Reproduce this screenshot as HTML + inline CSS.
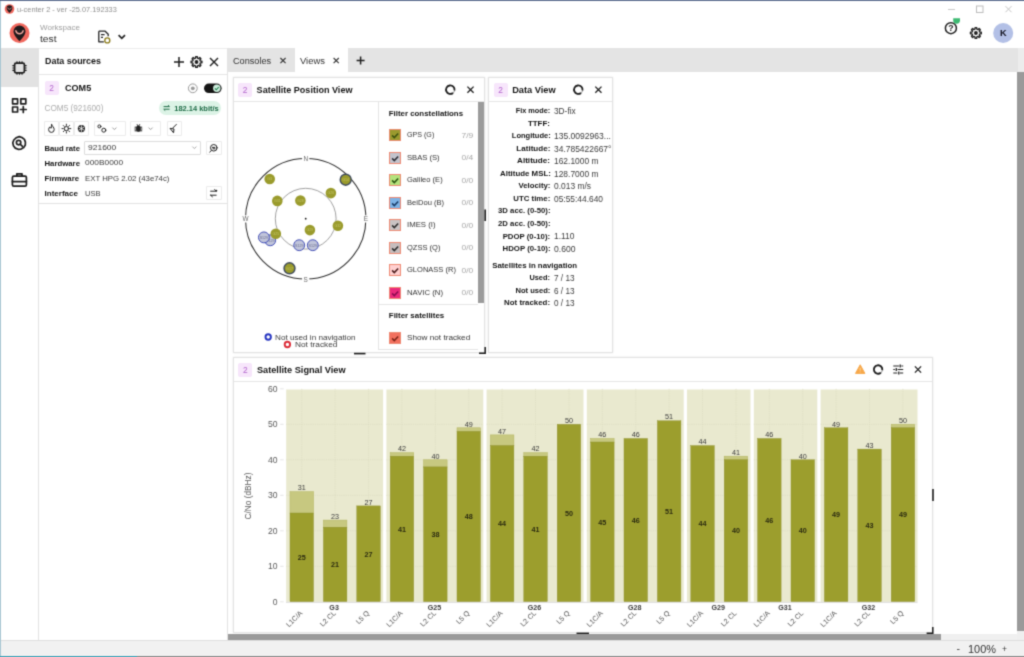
<!DOCTYPE html><html><head><meta charset="utf-8"><title>u-center 2</title><style>
*{box-sizing:border-box;margin:0;padding:0}
html,body{width:1024px;height:657px;overflow:hidden;background:#fff;font-family:"Liberation Sans",sans-serif;color:#222}
.a{position:absolute}
.t{position:absolute;white-space:nowrap;line-height:1;transform-origin:0 50%}
.b{font-weight:bold}
svg{position:absolute;overflow:visible}
#root{position:absolute;left:0;top:0;width:1024px;height:657px;overflow:hidden;background:#fff;will-change:transform;filter:url(#bl)}
.badge{position:absolute;width:14px;height:14px;background:#f7e6fb;border-radius:2px;color:#b264cc;font-size:8.4px;font-weight:normal;text-align:center;line-height:14px}
.panel{position:absolute;background:#fff;border:1px solid #e3e3e3;box-shadow:0 0 2px rgba(0,0,0,.10)}
.ph{position:absolute;left:0;right:0;top:0;height:24px;border-bottom:1px solid #e6e6e6}
.btn{position:absolute;border:1px solid #ebebeb;background:#fff;border-radius:1px}
</style></head><body><svg width="0" height="0" style="position:absolute"><filter id="bl" x="0" y="0" width="100%" height="100%" color-interpolation-filters="sRGB"><feConvolveMatrix order="3" kernelMatrix="0.0277 0.1110 0.0277 0.1110 0.4452 0.1110 0.0277 0.1110 0.0277" edgeMode="duplicate" preserveAlpha="true"/></filter></svg><div id="root">
<div class="a" style="left:0px;top:0px;width:1024px;height:1px;background:#5d6e90;"></div>
<div class="a" style="left:0px;top:1px;width:1px;height:656px;background:#a9c7d3;"></div>
<svg style="left:0px;top:0px" width="20" height="20" viewBox="0 0 20 20"><circle cx="9.5" cy="9" r="4.8" fill="#f0685e"/><path transform="translate(9.5,9) scale(0.48)" d="M0,8.2 C-2.2,5.6 -6,1.8 -6,-1.6 A6,6 0 1 1 6,-1.6 C6,1.8 2.2,5.6 0,8.2Z" fill="#1f1a1c"/><path transform="translate(9.5,9) scale(0.48)" d="M-3.6,-2.2 A3.7,3.7 0 0 0 3.6,-2.2" fill="none" stroke="#f6a79f" stroke-width="1.5" stroke-linecap="round"/></svg>
<div class="t" style="font-size:7.40px;color:#8e8e8e;top:5.97px;left:17.00px;transform-origin:0 50%;">u-center 2 - ver -25.07.192333</div>
<svg style="left:940px;top:0px" width="84" height="18" viewBox="0 0 84 18"><path d="M8,9.5h7" stroke="#c9c9c9" stroke-width="1" fill="none"/><rect x="36.5" y="6" width="6.5" height="6.5" fill="none" stroke="#bdbdbd" stroke-width="1"/><path d="M65.5,6.2l6,6m0,-6l-6,6" stroke="#c4c4c4" stroke-width="1" fill="none"/></svg>
<svg style="left:0px;top:18px" width="40" height="30" viewBox="0 0 40 30"><circle cx="19.5" cy="15" r="10" fill="#f0685e"/><path transform="translate(19.5,15) scale(1.0)" d="M0,8.2 C-2.2,5.6 -6,1.8 -6,-1.6 A6,6 0 1 1 6,-1.6 C6,1.8 2.2,5.6 0,8.2Z" fill="#1f1a1c"/><path transform="translate(19.5,15) scale(1.0)" d="M-3.6,-2.2 A3.7,3.7 0 0 0 3.6,-2.2" fill="none" stroke="#f6a79f" stroke-width="1.5" stroke-linecap="round"/></svg>
<div class="t" style="font-size:8.03px;color:#9e9e9e;top:23.67px;left:40.00px;transform-origin:0 50%;">Workspace</div>
<div class="t" style="font-size:9.20px;color:#2a2a2a;top:34.99px;left:40.00px;transform-origin:0 50%;transform:scaleX(1.113);">test</div>
<svg style="left:96px;top:29px" width="34" height="16" viewBox="0 0 34 16"><path d="M2.8,2.2h6.4l3,3v2" fill="none" stroke="#222" stroke-width="1.3" stroke-linejoin="round"/><path d="M2.8,2.2v10.6h5" fill="none" stroke="#222" stroke-width="1.3" stroke-linejoin="round"/><path d="M5,5.6h3.6M5,8.4h2" stroke="#222" stroke-width="1.2"/><circle cx="11.3" cy="11.4" r="2.5" fill="none" stroke="#8a7a18" stroke-width="1.3"/><path d="M22.6,6.2l3.2,3.2l3.2,-3.2" fill="none" stroke="#222" stroke-width="1.7"/></svg>
<svg style="left:940px;top:18px" width="84" height="30" viewBox="0 0 84 30"><circle cx="10.9" cy="10.2" r="5.5" fill="#fff" stroke="#222" stroke-width="1.5"/><text x="10.9" y="13.3" font-size="8.8" font-weight="bold" text-anchor="middle" fill="#222" font-family="Liberation Sans">?</text><path d="M13.2,0.3h6.8v2a3.4,3.4 0 0 1 -6.8,0z" fill="#3dba72"/><path d="M35.08,9.56 L36.72,9.56 L36.84,11.22 L37.91,11.66 L39.17,10.58 L40.32,11.73 L39.24,12.99 L39.68,14.06 L41.34,14.18 L41.34,15.82 L39.68,15.94 L39.24,17.01 L40.32,18.27 L39.17,19.42 L37.91,18.34 L36.84,18.78 L36.72,20.44 L35.08,20.44 L34.96,18.78 L33.89,18.34 L32.63,19.42 L31.48,18.27 L32.56,17.01 L32.12,15.94 L30.46,15.82 L30.46,14.18 L32.12,14.06 L32.56,12.99 L31.48,11.73 L32.63,10.58 L33.89,11.66 L34.96,11.22Z" fill="none" stroke="#1e1e1e" stroke-width="1.35" stroke-linejoin="round"/><circle cx="35.9" cy="15" r="1.9" fill="#1e1e1e"/><circle cx="63.2" cy="15" r="10" fill="#b3c0e6"/><text x="63.3" y="18.3" font-size="9.2" font-weight="bold" text-anchor="middle" fill="#10101c" font-family="Liberation Sans">K</text></svg>
<div class="a" style="left:1px;top:48px;width:1023px;height:1px;background:#ececec;"></div>
<div class="a" style="left:1px;top:48px;width:37px;height:38.5px;background:#e2e2e2;"></div>
<div class="a" style="left:38px;top:48px;width:1px;height:592px;background:#e3e3e3;"></div>
<svg style="left:11px;top:60px" width="17" height="16" viewBox="0 0 17 16"><rect x="3.6" y="3.2" width="9.8" height="9.6" rx="1.6" stroke="#1e1e1e" stroke-width="1.7" fill="none" stroke-linejoin="round" stroke-linecap="round"/><path d="M6,1.2v2M8.5,1.2v2M11,1.2v2M6,12.8v2M8.5,12.8v2M11,12.8v2M1.4,5.6h2.2M1.4,8h2.2M1.4,10.4h2.2M13.4,5.6h2.2M13.4,8h2.2M13.4,10.4h2.2" stroke="#1e1e1e" stroke-width="1.1" fill="none"/></svg>
<svg style="left:11px;top:97px" width="17" height="17" viewBox="0 0 17 17"><rect x="1.6" y="1.8" width="5" height="5" stroke="#1e1e1e" stroke-width="1.7" fill="none" stroke-linejoin="round" stroke-linecap="round"/><rect x="9.8" y="1.8" width="5" height="5" stroke="#1e1e1e" stroke-width="1.7" fill="none" stroke-linejoin="round" stroke-linecap="round"/><rect x="1.6" y="10" width="5" height="5" stroke="#1e1e1e" stroke-width="1.7" fill="none" stroke-linejoin="round" stroke-linecap="round"/><path d="M12.3,9.6v5.8M9.4,12.5h5.8" stroke="#1e1e1e" stroke-width="1.7" fill="none" stroke-linejoin="round" stroke-linecap="round"/></svg>
<svg style="left:11px;top:135px" width="17" height="17" viewBox="0 0 17 17"><path d="M8.3,1.6 l2.6,.9 2.5,1.9 1,2.7 -.1,2.9 -1.6,2.6 -2.6,1.5 -3,.2 -2.8,-1.2 -1.9,-2.4 -.6,-2.9 1,-2.8 2.3,-2.2z" stroke="#1e1e1e" stroke-width="1.7" fill="none" stroke-linejoin="round" stroke-linecap="round"/><circle cx="7.6" cy="7.6" r="2.2" stroke="#1e1e1e" stroke-width="1.7" fill="none" stroke-linejoin="round" stroke-linecap="round"/><path d="M9.3,9.3l2.2,2.1" stroke="#1e1e1e" stroke-width="1.7" fill="none" stroke-linejoin="round" stroke-linecap="round"/></svg>
<svg style="left:11px;top:172px" width="17" height="16" viewBox="0 0 17 16"><rect x="1.4" y="4.2" width="14" height="10" rx="1.4" stroke="#1e1e1e" stroke-width="1.7" fill="none" stroke-linejoin="round" stroke-linecap="round"/><path d="M5.8,4v-2.2h5.2v2.2M1.4,9.6h14M7,9.6h3" stroke="#1e1e1e" stroke-width="1.7" fill="none" stroke-linejoin="round" stroke-linecap="round"/></svg>
<div class="a" style="left:227px;top:48px;width:1px;height:592px;background:#e3e3e3;"></div>
<div class="t" style="font-size:8.92px;color:#151515;top:57.13px;font-weight:bold;left:45.00px;transform-origin:0 50%;">Data sources</div>
<svg style="left:172px;top:54px" width="50" height="16" viewBox="0 0 50 16"><path d="M7,3v10M2,8h10" stroke="#1e1e1e" stroke-width="1.5" fill="none"/><path d="M23.68,2.56 L25.32,2.56 L25.44,4.22 L26.51,4.66 L27.77,3.58 L28.92,4.73 L27.84,5.99 L28.28,7.06 L29.94,7.18 L29.94,8.82 L28.28,8.94 L27.84,10.01 L28.92,11.27 L27.77,12.42 L26.51,11.34 L25.44,11.78 L25.32,13.44 L23.68,13.44 L23.56,11.78 L22.49,11.34 L21.23,12.42 L20.08,11.27 L21.16,10.01 L20.72,8.94 L19.06,8.82 L19.06,7.18 L20.72,7.06 L21.16,5.99 L20.08,4.73 L21.23,3.58 L22.49,4.66 L23.56,4.22Z" fill="none" stroke="#1e1e1e" stroke-width="1.35" stroke-linejoin="round"/><circle cx="24.5" cy="8" r="1.9" fill="#1e1e1e"/><path d="M38,4l8,8m0,-8l-8,8" stroke="#1e1e1e" stroke-width="1.4" fill="none"/></svg>
<div class="a" style="left:39px;top:73.5px;width:188px;height:1px;background:#e6e6e6;"></div>
<div class="badge" style="left:44.5px;top:81px">2</div>
<div class="t" style="font-size:9.07px;color:#151515;top:84.26px;font-weight:bold;left:65.00px;transform-origin:0 50%;">COM5</div>
<svg style="left:186px;top:82px" width="40" height="13" viewBox="0 0 40 13"><circle cx="6.8" cy="6.3" r="4.4" fill="#fff" stroke="#9a9a9a" stroke-width="1"/><circle cx="6.8" cy="6.3" r="1.9" fill="#9a9a9a"/><rect x="18" y="1.5" width="17.6" height="9.6" rx="4.8" fill="#151515"/><circle cx="30.8" cy="6.3" r="3.7" fill="#cdeedd"/><path d="M28.9,6.4l1.4,1.4 2.5,-2.8" stroke="#1e7a4a" stroke-width="1.1" fill="none"/></svg>
<div class="t" style="font-size:8.23px;color:#adadad;top:105.17px;left:44.50px;transform-origin:0 50%;">COM5 (921600)</div>
<div class="a" style="left:158.8px;top:100.5px;width:62.6px;height:14.6px;background:#dcf3e6;border-radius:7.3px"></div>
<svg style="left:162.4px;top:103px" width="12" height="10" viewBox="0 0 12 10"><path d="M1.6,3.6h5.8M6,2.2l1.5,1.4M7.6,6.2h-5.8M3.2,7.6l-1.5,-1.4" stroke="#1e6b46" stroke-width="1" fill="none"/></svg>
<div class="t" style="font-size:7.48px;color:#1e6b46;top:104.63px;font-weight:bold;left:174.30px;transform-origin:0 50%;">182.14 kbit/s</div>
<div class="btn" style="left:44.4px;top:120.5px;width:15px;height:15px"></div>
<div class="btn" style="left:59.4px;top:120.5px;width:15px;height:15px"></div>
<div class="btn" style="left:74.4px;top:120.5px;width:15px;height:15px"></div>
<div class="btn" style="left:94px;top:120.5px;width:31.8px;height:15px"></div>
<div class="btn" style="left:130px;top:120.5px;width:31px;height:15px"></div>
<div class="btn" style="left:166.5px;top:120.5px;width:15px;height:15px"></div>
<svg style="left:44.4px;top:120.5px" width="140" height="15" viewBox="0 0 140 15"><path d="M7.6,3.6c.4,1.6 2.6,2.6 2.6,5a2.8,2.8 0 0 1 -5.6,0c0,-1.4 .8,-2.2 1.4,-2.8c.2,1 .8,1.4 1.2,1.4c.6,-1 .2,-2.6 .4,-3.6z" stroke="#222" stroke-width="1" fill="none" stroke-linejoin="round" stroke-linecap="round"/><circle cx="22.4" cy="7.6" r="2.1" stroke="#222" stroke-width="1" fill="none" stroke-linejoin="round" stroke-linecap="round"/><path d="M22.4,3.2v1.2M22.4,10.8v1.2M18,7.6h1.2M25.6,7.6h1.2M19.3,4.5l.9,.9M24.6,9.8l.9,.9M25.5,4.5l-.9,.9M20.2,9.8l-.9,.9" stroke="#222" stroke-width="1" fill="none" stroke-linejoin="round" stroke-linecap="round"/><circle cx="37.4" cy="7.6" r="3.6" fill="#222"/><path d="M37.4,4.4v6.4M34.6,6l5.6,3.2M40.2,6l-5.6,3.2" stroke="#fff" stroke-width=".8"/><circle cx="55.4" cy="5.4" r="1.5" stroke="#222" stroke-width="1" fill="none" stroke-linejoin="round" stroke-linecap="round" stroke-width="1.5"/><circle cx="59.8" cy="9.2" r="2" stroke="#222" stroke-width="1" fill="none" stroke-linejoin="round" stroke-linecap="round" stroke-width="1.8"/><path d="M68.4,6.6l2,2 2,-2" stroke="#9a9a9a" stroke-width="1" fill="none"/><rect x="92.2" y="4.8" width="4.4" height="6" rx="2" fill="#222"/><path d="M91,6.2h6.8M90.8,8h7.2M91,9.8h6.8M93.2,3.6l.7,1.2M95.6,3.6l-.7,1.2" stroke="#222" stroke-width="1" fill="none" stroke-linejoin="round" stroke-linecap="round" stroke-width=".8"/><path d="M104.6,6.6l2,2 2,-2" stroke="#9a9a9a" stroke-width="1" fill="none"/><path d="M132.4,3.4l-3.6,3.6M126.4,7.4l3.6,.6 -.4,3.4z" stroke="#222" stroke-width="1" fill="none" stroke-linejoin="round" stroke-linecap="round"/></svg>
<div class="t" style="font-size:7.70px;color:#141414;top:144.53px;font-weight:bold;left:44.50px;transform-origin:0 50%;">Baud rate</div>
<div class="btn" style="left:84.4px;top:140.6px;width:117px;height:14.6px;border-color:#dcdcdc"></div>
<div class="t" style="font-size:8.00px;color:#3a3a3a;top:144.28px;left:88.00px;transform-origin:0 50%;transform:scaleX(1.060);">921600</div>
<svg style="left:190px;top:144px" width="10" height="8" viewBox="0 0 10 8"><path d="M2.4,2.6l2,2 2,-2" stroke="#a8a8a8" stroke-width="1" fill="none"/></svg>
<div class="btn" style="left:206.4px;top:140.6px;width:15.2px;height:14.6px"></div>
<svg style="left:206.4px;top:140.6px" width="15.2" height="14.6" viewBox="0 0 15.2 14.6"><circle cx="7.8" cy="6.8" r="3.3" stroke="#222" stroke-width="1" fill="none" stroke-linejoin="round" stroke-linecap="round" stroke-width="1.2"/><path d="M5.2,9.6l-1.4,1.6" stroke="#222" stroke-width="1" fill="none" stroke-linejoin="round" stroke-linecap="round" stroke-width="1.3"/><path d="M6.4,6.4h2.4M7,7.8h2" stroke="#222" stroke-width="1" fill="none" stroke-linejoin="round" stroke-linecap="round" stroke-width=".9"/></svg>
<div class="t" style="font-size:7.79px;color:#141414;top:159.58px;font-weight:bold;left:44.50px;transform-origin:0 50%;">Hardware</div>
<div class="t" style="font-size:8.00px;color:#3a3a3a;top:159.48px;left:84.60px;transform-origin:0 50%;transform:scaleX(1.044);">000B0000</div>
<div class="t" style="font-size:7.76px;color:#141414;top:174.80px;font-weight:bold;left:44.50px;transform-origin:0 50%;">Firmware</div>
<div class="t" style="font-size:8.00px;color:#3a3a3a;top:174.68px;left:84.60px;transform-origin:0 50%;transform:scaleX(0.975);">EXT HPG 2.02 (43e74c)</div>
<div class="t" style="font-size:8.04px;color:#141414;top:189.66px;font-weight:bold;left:44.50px;transform-origin:0 50%;">Interface</div>
<div class="t" style="font-size:8.00px;color:#3a3a3a;top:189.68px;left:84.60px;transform-origin:0 50%;transform:scaleX(0.942);">USB</div>
<div class="btn" style="left:206.4px;top:185.5px;width:15.2px;height:14.6px"></div>
<svg style="left:206.4px;top:185.5px" width="15.2" height="14.6" viewBox="0 0 15.2 14.6"><path d="M4.6,5.2h5M4.6,9.2h5.6" stroke="#222" stroke-width="1" fill="none" stroke-linejoin="round" stroke-linecap="round" stroke-width="1.2"/><path d="M8.6,3.6l1.8,1.6M6.4,10.8l-1.8,-1.6" stroke="#222" stroke-width="1" fill="none" stroke-linejoin="round" stroke-linecap="round" stroke-width="1"/><circle cx="10.4" cy="4.6" r=".9" fill="#222"/></svg>
<div class="a" style="left:39px;top:202.8px;width:188px;height:1px;background:#e3e3e3;"></div>
<div class="a" style="left:228px;top:48px;width:796px;height:24px;background:#e4e4e4;"></div>
<div class="a" style="left:1017.5px;top:48px;width:6.5px;height:24px;background:#ececec;"></div>
<div class="a" style="left:295.2px;top:48px;width:52.6px;height:24px;background:#fff;"></div>
<div class="t" style="font-size:9.20px;color:#303030;top:57.09px;left:233.00px;transform-origin:0 50%;transform:scaleX(0.996);">Consoles</div>
<div class="t" style="font-size:9.20px;color:#303030;top:57.09px;left:300.40px;transform-origin:0 50%;transform:scaleX(1.026);">Views</div>
<svg style="left:277px;top:55px" width="90" height="12" viewBox="0 0 90 12"><path d="M3.4,3l5.2,5.2m0,-5.2l-5.2,5.2" stroke="#333" stroke-width="1.1" fill="none"/><path d="M56.6,3l5.2,5.2m0,-5.2l-5.2,5.2" stroke="#333" stroke-width="1.1" fill="none"/><path d="M83.6,1.6v8M79.6,5.6h8" stroke="#1e1e1e" stroke-width="1.5" fill="none"/></svg>
<div class="panel" style="left:232.8px;top:77px;width:252px;height:276px"><div class="ph"></div></div>
<div class="badge" style="left:238.0px;top:82.6px">2</div>
<div class="t" style="font-size:9.06px;color:#151515;top:85.66px;font-weight:bold;left:256.60px;transform-origin:0 50%;">Satellite Position View</div>
<svg style="left:0px;top:0px" width="1024" height="657" viewBox="0 0 1024 657"><circle cx="305.7" cy="218.7" r="60.2" fill="none" stroke="#2e2e2e" stroke-width="1.05"/><circle cx="305.7" cy="218.7" r="30.4" fill="none" stroke="#808080" stroke-width=".75"/><circle cx="305.7" cy="218.7" r=".9" fill="#111"/><rect x="302.09999999999997" y="154.8" width="7.2" height="7.2" fill="#fff"/><text x="305.7" y="160.70000000000002" font-size="6.4" text-anchor="middle" fill="#666" font-family="Liberation Sans">N</text><rect x="362.29999999999995" y="215.3" width="7.2" height="7.2" fill="#fff"/><text x="365.9" y="221.20000000000002" font-size="6.4" text-anchor="middle" fill="#666" font-family="Liberation Sans">E</text><rect x="302.09999999999997" y="275.59999999999997" width="7.2" height="7.2" fill="#fff"/><text x="305.7" y="281.5" font-size="6.4" text-anchor="middle" fill="#666" font-family="Liberation Sans">S</text><rect x="241.8" y="215.3" width="7.2" height="7.2" fill="#fff"/><text x="245.4" y="221.20000000000002" font-size="6.4" text-anchor="middle" fill="#666" font-family="Liberation Sans">W</text><circle cx="270.2" cy="240.3" r="5.45" fill="#c0c4da" stroke="#4652b8" stroke-width="1"/><text x="270.2" y="241.60000000000002" font-size="3.6" text-anchor="middle" fill="#6a6f90" font-family="Liberation Sans">S129</text><circle cx="263.9" cy="237.4" r="5.45" fill="#c0c4da" stroke="#4652b8" stroke-width="1"/><text x="263.9" y="238.70000000000002" font-size="3.6" text-anchor="middle" fill="#6a6f90" font-family="Liberation Sans">S129</text><circle cx="299.2" cy="245.2" r="5.45" fill="#c0c4da" stroke="#4652b8" stroke-width="1"/><text x="299.2" y="246.5" font-size="3.6" text-anchor="middle" fill="#6a6f90" font-family="Liberation Sans">S129</text><circle cx="312.8" cy="245.2" r="5.45" fill="#c0c4da" stroke="#4652b8" stroke-width="1"/><text x="312.8" y="246.5" font-size="3.6" text-anchor="middle" fill="#6a6f90" font-family="Liberation Sans">S129</text><circle cx="269.7" cy="179" r="5.3" fill="#9a9b2c"/><text x="269.7" y="180.3" font-size="3.6" text-anchor="middle" fill="#c2c366" font-family="Liberation Sans">G3</text><circle cx="345.7" cy="179.7" r="5.5" fill="#9a9b2c" stroke="#3f4b5c" stroke-width="1.4"/><text x="345.7" y="181.0" font-size="3.6" text-anchor="middle" fill="#c2c366" font-family="Liberation Sans">G14</text><circle cx="330.9" cy="193.1" r="5.3" fill="#9a9b2c"/><text x="330.9" y="194.4" font-size="3.6" text-anchor="middle" fill="#c2c366" font-family="Liberation Sans">G26</text><circle cx="277.3" cy="200.9" r="5.3" fill="#9a9b2c"/><text x="277.3" y="202.20000000000002" font-size="3.6" text-anchor="middle" fill="#c2c366" font-family="Liberation Sans">G31</text><circle cx="300.4" cy="200.6" r="5.3" fill="#9a9b2c"/><text x="300.4" y="201.9" font-size="3.6" text-anchor="middle" fill="#c2c366" font-family="Liberation Sans">G28</text><circle cx="337.9" cy="225.7" r="5.3" fill="#9a9b2c"/><text x="337.9" y="227.0" font-size="3.6" text-anchor="middle" fill="#c2c366" font-family="Liberation Sans">G32</text><circle cx="309.9" cy="230.1" r="5.3" fill="#9a9b2c"/><text x="309.9" y="231.4" font-size="3.6" text-anchor="middle" fill="#c2c366" font-family="Liberation Sans">G29</text><circle cx="275.8" cy="233.7" r="5.3" fill="#9a9b2c"/><text x="275.8" y="235.0" font-size="3.6" text-anchor="middle" fill="#c2c366" font-family="Liberation Sans">G25</text><circle cx="289.5" cy="268.3" r="5.5" fill="#9a9b2c" stroke="#3f4b5c" stroke-width="1.4"/><text x="289.5" y="269.6" font-size="3.6" text-anchor="middle" fill="#c2c366" font-family="Liberation Sans">G17</text><circle cx="268.2" cy="337" r="2.7" fill="#fff" stroke="#2433c0" stroke-width="1.9"/><circle cx="287.4" cy="344.5" r="2.7" fill="#fff" stroke="#dc2c38" stroke-width="1.9"/></svg>
<div class="t" style="font-size:7.40px;color:#3c3c3c;top:333.87px;left:275.40px;transform-origin:0 50%;transform:scaleX(1.101);">Not used in navigation</div>
<div class="t" style="font-size:7.40px;color:#3c3c3c;top:341.27px;left:294.60px;transform-origin:0 50%;transform:scaleX(1.123);">Not tracked</div>
<div class="a" style="left:378.2px;top:101.5px;width:0.9px;height:248px;background:#e4e4e4;"></div>
<div class="a" style="left:378.2px;top:349px;width:100px;height:0.9px;background:#e4e4e4;"></div>
<div class="a" style="left:378.6px;top:304px;width:99.6px;height:0.9px;background:#e6e6e6;"></div>
<div class="a" style="left:478.3px;top:101.5px;width:5.8px;height:201.6px;background:#9b9b9b;"></div>
<div class="t" style="font-size:7.87px;color:#141414;top:109.65px;font-weight:bold;left:388.80px;transform-origin:0 50%;">Filter constellations</div>
<div class="a" style="left:388.7px;top:129.10000000000002px;width:12.2px;height:12.4px;background:#9a9a2e;border:1.3px solid #ee8a74"></div>
<svg style="left:388.7px;top:129.10000000000002px" width="12.2" height="12.4" viewBox="0 0 12.2 12.4"><path d="M3.1,6.4l2.2,2.2 3.9,-4.2" stroke="#3c5210" stroke-width="1.5" fill="none"/></svg>
<div class="t" style="font-size:8.10px;color:#333;top:131.33px;left:406.60px;transform-origin:0 50%;transform:scaleX(0.879);">GPS (G)</div>
<div class="t" style="font-size:8.10px;color:#a6a6a6;top:131.78px;right:551.20px;transform-origin:100% 50%;transform:scaleX(1.048);">7/9</div>
<div class="a" style="left:388.7px;top:151.60000000000002px;width:12.2px;height:12.4px;background:#c3c3cc;border:1.3px solid #ee8a74"></div>
<svg style="left:388.7px;top:151.60000000000002px" width="12.2" height="12.4" viewBox="0 0 12.2 12.4"><path d="M3.1,6.4l2.2,2.2 3.9,-4.2" stroke="#2c2c34" stroke-width="1.5" fill="none"/></svg>
<div class="t" style="font-size:8.10px;color:#333;top:153.83px;left:406.60px;transform-origin:0 50%;transform:scaleX(0.943);">SBAS (S)</div>
<div class="t" style="font-size:8.10px;color:#a6a6a6;top:154.28px;right:551.20px;transform-origin:100% 50%;transform:scaleX(1.048);">0/4</div>
<div class="a" style="left:388.7px;top:174.10000000000002px;width:12.2px;height:12.4px;background:#b4e27c;border:1.3px solid #ee8a74"></div>
<svg style="left:388.7px;top:174.10000000000002px" width="12.2" height="12.4" viewBox="0 0 12.2 12.4"><path d="M3.1,6.4l2.2,2.2 3.9,-4.2" stroke="#2a5410" stroke-width="1.5" fill="none"/></svg>
<div class="t" style="font-size:8.10px;color:#333;top:176.33px;left:406.60px;transform-origin:0 50%;transform:scaleX(0.933);">Galileo (E)</div>
<div class="t" style="font-size:8.10px;color:#a6a6a6;top:176.78px;right:551.20px;transform-origin:100% 50%;transform:scaleX(1.048);">0/0</div>
<div class="a" style="left:388.7px;top:196.60000000000002px;width:12.2px;height:12.4px;background:#7db3e6;border:1.3px solid #ee8a74"></div>
<svg style="left:388.7px;top:196.60000000000002px" width="12.2" height="12.4" viewBox="0 0 12.2 12.4"><path d="M3.1,6.4l2.2,2.2 3.9,-4.2" stroke="#183a66" stroke-width="1.5" fill="none"/></svg>
<div class="t" style="font-size:8.10px;color:#333;top:198.83px;left:406.60px;transform-origin:0 50%;transform:scaleX(0.936);">BeiDou (B)</div>
<div class="t" style="font-size:8.10px;color:#a6a6a6;top:199.28px;right:551.20px;transform-origin:100% 50%;transform:scaleX(1.048);">0/0</div>
<div class="a" style="left:388.7px;top:219.10000000000002px;width:12.2px;height:12.4px;background:#c9c3c3;border:1.3px solid #ee8a74"></div>
<svg style="left:388.7px;top:219.10000000000002px" width="12.2" height="12.4" viewBox="0 0 12.2 12.4"><path d="M3.1,6.4l2.2,2.2 3.9,-4.2" stroke="#2c2c2c" stroke-width="1.5" fill="none"/></svg>
<div class="t" style="font-size:8.10px;color:#333;top:221.33px;left:406.60px;transform-origin:0 50%;transform:scaleX(0.963);">IMES (I)</div>
<div class="t" style="font-size:8.10px;color:#a6a6a6;top:221.78px;right:551.20px;transform-origin:100% 50%;transform:scaleX(1.048);">0/0</div>
<div class="a" style="left:388.7px;top:241.60000000000002px;width:12.2px;height:12.4px;background:#c6bdbd;border:1.3px solid #ee8a74"></div>
<svg style="left:388.7px;top:241.60000000000002px" width="12.2" height="12.4" viewBox="0 0 12.2 12.4"><path d="M3.1,6.4l2.2,2.2 3.9,-4.2" stroke="#2c2c2c" stroke-width="1.5" fill="none"/></svg>
<div class="t" style="font-size:8.10px;color:#333;top:243.83px;left:406.60px;transform-origin:0 50%;transform:scaleX(0.931);">QZSS (Q)</div>
<div class="t" style="font-size:8.10px;color:#a6a6a6;top:244.28px;right:551.20px;transform-origin:100% 50%;transform:scaleX(1.048);">0/0</div>
<div class="a" style="left:388.7px;top:264.1px;width:12.2px;height:12.4px;background:#ffd0d0;border:1.3px solid #ee8a74"></div>
<svg style="left:388.7px;top:264.1px" width="12.2" height="12.4" viewBox="0 0 12.2 12.4"><path d="M3.1,6.4l2.2,2.2 3.9,-4.2" stroke="#4a1a1a" stroke-width="1.5" fill="none"/></svg>
<div class="t" style="font-size:8.10px;color:#333;top:266.33px;left:406.60px;transform-origin:0 50%;transform:scaleX(0.929);">GLONASS (R)</div>
<div class="t" style="font-size:8.10px;color:#a6a6a6;top:266.78px;right:551.20px;transform-origin:100% 50%;transform:scaleX(1.048);">0/0</div>
<div class="a" style="left:388.7px;top:286.6px;width:12.2px;height:12.4px;background:#ea2a7c;border:1.3px solid #ee8a74"></div>
<svg style="left:388.7px;top:286.6px" width="12.2" height="12.4" viewBox="0 0 12.2 12.4"><path d="M3.1,6.4l2.2,2.2 3.9,-4.2" stroke="#8a0c50" stroke-width="1.5" fill="none"/></svg>
<div class="t" style="font-size:8.10px;color:#333;top:288.83px;left:406.60px;transform-origin:0 50%;transform:scaleX(0.956);">NAVIC (N)</div>
<div class="t" style="font-size:8.10px;color:#a6a6a6;top:289.28px;right:551.20px;transform-origin:100% 50%;transform:scaleX(1.048);">0/0</div>
<div class="t" style="font-size:7.93px;color:#141414;top:312.12px;font-weight:bold;left:388.80px;transform-origin:0 50%;">Filter satellites</div>
<div class="a" style="left:388.7px;top:331.8px;width:12.2px;height:12.4px;background:#f2705e;border:1.3px solid #ee8a74"></div>
<svg style="left:388.7px;top:331.8px" width="12.2" height="12.4" viewBox="0 0 12.2 12.4"><path d="M3.1,6.4l2.2,2.2 3.9,-4.2" stroke="#7a2418" stroke-width="1.5" fill="none"/></svg>
<div class="t" style="font-size:8.10px;color:#333;top:334.13px;left:406.60px;transform-origin:0 50%;transform:scaleX(1.011);">Show not tracked</div>
<div class="panel" style="left:488.4px;top:77px;width:124.2px;height:276px"><div class="ph"></div></div>
<div class="badge" style="left:493.59999999999997px;top:82.6px">2</div>
<div class="t" style="font-size:9.24px;color:#151515;top:85.57px;font-weight:bold;left:512.20px;transform-origin:0 50%;">Data View</div>
<svg style="left:0px;top:0px" width="1024" height="657" viewBox="0 0 1024 657"><circle cx="450.3" cy="89.7" r="4.25" stroke="#9a9a9a" stroke-width="1.1" fill="none"/><path d="M453.03,92.96 A4.25,4.25 0 1 1 454.51,90.29" stroke="#1e1e1e" stroke-width="1.8" fill="none"/><path d="M467.4,86.60000000000001l6.2,6.2m0,-6.2l-6.2,6.2" stroke="#1e1e1e" stroke-width="1.3" fill="none"/><circle cx="578.3" cy="89.7" r="4.25" stroke="#9a9a9a" stroke-width="1.1" fill="none"/><path d="M581.03,92.96 A4.25,4.25 0 1 1 582.51,90.29" stroke="#1e1e1e" stroke-width="1.8" fill="none"/><path d="M595.3,86.60000000000001l6.2,6.2m0,-6.2l-6.2,6.2" stroke="#1e1e1e" stroke-width="1.3" fill="none"/></svg>
<div class="t" style="font-size:7.90px;color:#141414;top:107.23px;font-weight:bold;right:473.60px;transform-origin:100% 50%;transform:scaleX(0.927);">Fix mode:</div>
<div class="t" style="font-size:8.30px;color:#3a3a3a;top:107.03px;left:553.50px;transform-origin:0 50%;transform:scaleX(1.001);">3D-fix</div>
<div class="t" style="font-size:7.90px;color:#141414;top:119.76px;font-weight:bold;right:473.60px;transform-origin:100% 50%;transform:scaleX(1.003);">TTFF:</div>
<div class="t" style="font-size:7.90px;color:#141414;top:132.29px;font-weight:bold;right:473.60px;transform-origin:100% 50%;transform:scaleX(0.956);">Longitude:</div>
<div class="t" style="font-size:8.30px;color:#3a3a3a;top:132.09px;left:553.50px;transform-origin:0 50%;transform:scaleX(1.029);">135.0092963...</div>
<div class="t" style="font-size:7.90px;color:#141414;top:144.82px;font-weight:bold;right:473.60px;transform-origin:100% 50%;transform:scaleX(1.019);">Latitude:</div>
<div class="t" style="font-size:8.30px;color:#3a3a3a;top:144.62px;left:553.50px;transform-origin:0 50%;transform:scaleX(1.019);">34.785422667°</div>
<div class="t" style="font-size:7.90px;color:#141414;top:157.35px;font-weight:bold;right:473.60px;transform-origin:100% 50%;transform:scaleX(1.030);">Altitude:</div>
<div class="t" style="font-size:8.30px;color:#3a3a3a;top:157.15px;left:553.50px;transform-origin:0 50%;transform:scaleX(1.015);">162.1000 m</div>
<div class="t" style="font-size:7.90px;color:#141414;top:169.88px;font-weight:bold;right:473.60px;transform-origin:100% 50%;transform:scaleX(0.998);">Altitude MSL:</div>
<div class="t" style="font-size:8.30px;color:#3a3a3a;top:169.68px;left:553.50px;transform-origin:0 50%;transform:scaleX(1.015);">128.7000 m</div>
<div class="t" style="font-size:7.90px;color:#141414;top:182.41px;font-weight:bold;right:473.60px;transform-origin:100% 50%;transform:scaleX(0.985);">Velocity:</div>
<div class="t" style="font-size:8.30px;color:#3a3a3a;top:182.21px;left:553.50px;transform-origin:0 50%;transform:scaleX(1.015);">0.013 m/s</div>
<div class="t" style="font-size:7.90px;color:#141414;top:194.94px;font-weight:bold;right:473.60px;transform-origin:100% 50%;transform:scaleX(0.992);">UTC time:</div>
<div class="t" style="font-size:8.30px;color:#3a3a3a;top:194.74px;left:553.50px;transform-origin:0 50%;transform:scaleX(1.011);">05:55:44.640</div>
<div class="t" style="font-size:7.90px;color:#141414;top:207.47px;font-weight:bold;right:473.60px;transform-origin:100% 50%;transform:scaleX(0.980);">3D acc. (0-50):</div>
<div class="t" style="font-size:7.90px;color:#141414;top:220.00px;font-weight:bold;right:473.60px;transform-origin:100% 50%;transform:scaleX(0.980);">2D acc. (0-50):</div>
<div class="t" style="font-size:7.90px;color:#141414;top:232.53px;font-weight:bold;right:473.60px;transform-origin:100% 50%;transform:scaleX(0.987);">PDOP (0-10):</div>
<div class="t" style="font-size:8.30px;color:#3a3a3a;top:232.33px;left:553.50px;transform-origin:0 50%;transform:scaleX(1.017);">1.110</div>
<div class="t" style="font-size:7.90px;color:#141414;top:245.06px;font-weight:bold;right:473.60px;transform-origin:100% 50%;transform:scaleX(0.988);">HDOP (0-10):</div>
<div class="t" style="font-size:8.30px;color:#3a3a3a;top:244.86px;left:553.50px;transform-origin:0 50%;transform:scaleX(1.035);">0.600</div>
<div class="t" style="font-size:7.84px;color:#141414;top:262.16px;font-weight:bold;left:492.20px;transform-origin:0 50%;">Satellites in navigation</div>
<div class="t" style="font-size:7.90px;color:#141414;top:274.43px;font-weight:bold;right:473.60px;transform-origin:100% 50%;transform:scaleX(0.934);">Used:</div>
<div class="t" style="font-size:8.30px;color:#3a3a3a;top:274.23px;left:553.50px;transform-origin:0 50%;transform:scaleX(0.987);">7 / 13</div>
<div class="t" style="font-size:7.90px;color:#141414;top:286.96px;font-weight:bold;right:473.60px;transform-origin:100% 50%;transform:scaleX(0.961);">Not used:</div>
<div class="t" style="font-size:8.30px;color:#3a3a3a;top:286.76px;left:553.50px;transform-origin:0 50%;transform:scaleX(0.987);">6 / 13</div>
<div class="t" style="font-size:7.90px;color:#141414;top:299.49px;font-weight:bold;right:473.60px;transform-origin:100% 50%;transform:scaleX(0.998);">Not tracked:</div>
<div class="t" style="font-size:8.30px;color:#3a3a3a;top:299.29px;left:553.50px;transform-origin:0 50%;transform:scaleX(0.987);">0 / 13</div>
<div class="panel" style="left:233.2px;top:357.2px;width:699.4px;height:276px"><div class="ph"></div></div>
<div class="badge" style="left:238.39999999999998px;top:362.8px">2</div>
<div class="t" style="font-size:9.18px;color:#151515;top:365.80px;font-weight:bold;left:257.00px;transform-origin:0 50%;">Satellite Signal View</div>
<svg style="left:0px;top:0px" width="1024" height="657" viewBox="0 0 1024 657"><path d="M860.2,364.8l4.7,8.6h-9.4z" fill="#f7a84a" stroke="#f7a84a" stroke-width="1" stroke-linejoin="round"/><path d="M860.2,367.8v2.8M860.2,371.6v.8" stroke="#fbd9a8" stroke-width=".9"/><circle cx="878.1" cy="369.5" r="4.25" stroke="#9a9a9a" stroke-width="1.1" fill="none"/><path d="M880.83,372.76 A4.25,4.25 0 1 1 882.31,370.09" stroke="#1e1e1e" stroke-width="1.8" fill="none"/><path d="M893.3,366h5.6M901.4,366h1.8M893.3,369.5h1.6M897.6,369.5h5.6M893.3,373h4M900,373h3.2" stroke="#1e1e1e" stroke-width="1.2"/><path d="M900.2,364.4v3.2M896.3,367.9v3.2M898.8,371.4v3.2" stroke="#1e1e1e" stroke-width="1.3"/><path d="M914.9,366.4l6.2,6.2m0,-6.2l-6.2,6.2" stroke="#1e1e1e" stroke-width="1.3" fill="none"/></svg>
<svg style="left:0px;top:0px" width="1024" height="657" viewBox="0 0 1024 657"><text x="277.6" y="604.8" font-size="8.6" text-anchor="end" fill="#585858" font-family="Liberation Sans">0</text><path d="M280.2,601.8h3.4" stroke="#dedede" stroke-width=".8"/><text x="277.6" y="569.3" font-size="8.6" text-anchor="end" fill="#585858" font-family="Liberation Sans">10</text><path d="M280.2,566.3h3.4" stroke="#dedede" stroke-width=".8"/><text x="277.6" y="533.8" font-size="8.6" text-anchor="end" fill="#585858" font-family="Liberation Sans">20</text><path d="M280.2,530.8h3.4" stroke="#dedede" stroke-width=".8"/><text x="277.6" y="498.3" font-size="8.6" text-anchor="end" fill="#585858" font-family="Liberation Sans">30</text><path d="M280.2,495.3h3.4" stroke="#dedede" stroke-width=".8"/><text x="277.6" y="462.8" font-size="8.6" text-anchor="end" fill="#585858" font-family="Liberation Sans">40</text><path d="M280.2,459.8h3.4" stroke="#dedede" stroke-width=".8"/><text x="277.6" y="427.3" font-size="8.6" text-anchor="end" fill="#585858" font-family="Liberation Sans">50</text><path d="M280.2,424.3h3.4" stroke="#dedede" stroke-width=".8"/><text x="277.6" y="391.8" font-size="8.6" text-anchor="end" fill="#585858" font-family="Liberation Sans">60</text><path d="M280.2,388.8h3.4" stroke="#dedede" stroke-width=".8"/><text transform="translate(251.2,496) rotate(-90)" font-size="8.6" text-anchor="middle" fill="#585858" textLength="47" lengthAdjust="spacingAndGlyphs" font-family="Liberation Sans">C/No (dBHz)</text><rect x="286.2" y="389.5" width="96.9" height="212.3" fill="#e9e9cf"/><path d="M286.2,566.3H383.1" stroke="#d9d9bd" stroke-width=".6" stroke-dasharray="1.2,1"/><path d="M286.2,530.8H383.1" stroke="#d9d9bd" stroke-width=".6" stroke-dasharray="1.2,1"/><path d="M286.2,495.3H383.1" stroke="#d9d9bd" stroke-width=".6" stroke-dasharray="1.2,1"/><path d="M286.2,459.8H383.1" stroke="#d9d9bd" stroke-width=".6" stroke-dasharray="1.2,1"/><path d="M286.2,424.3H383.1" stroke="#d9d9bd" stroke-width=".6" stroke-dasharray="1.2,1"/><path d="M301.8,388.8V601.8" stroke="#d9d9bd" stroke-width=".6" stroke-dasharray="1.2,1"/><path d="M335.1,388.8V601.8" stroke="#d9d9bd" stroke-width=".6" stroke-dasharray="1.2,1"/><path d="M368.6,388.8V601.8" stroke="#d9d9bd" stroke-width=".6" stroke-dasharray="1.2,1"/><rect x="290.0" y="491.7" width="23.5" height="21.6" fill="#c7c880" stroke="#b2b35c" stroke-width=".5"/><rect x="290.0" y="513.0" width="23.5" height="88.8" fill="#9c9e2d" stroke="#8e9030" stroke-width=".4"/><text x="301.8" y="490.4" font-size="7.2" text-anchor="middle" fill="#383838" font-family="Liberation Sans">31</text><text x="301.8" y="560.0" font-size="7.2" font-weight="bold" text-anchor="middle" fill="#2a2a10" font-family="Liberation Sans">25</text><text transform="translate(302.9,613.6) rotate(-45)" font-size="7.1" text-anchor="end" fill="#555" font-family="Liberation Sans">L1C/A</text><rect x="323.4" y="520.1" width="23.5" height="7.4" fill="#c7c880" stroke="#b2b35c" stroke-width=".5"/><rect x="323.4" y="527.2" width="23.5" height="74.5" fill="#9c9e2d" stroke="#8e9030" stroke-width=".4"/><text x="335.1" y="518.9" font-size="7.2" text-anchor="middle" fill="#383838" font-family="Liberation Sans">23</text><text x="335.1" y="567.1" font-size="7.2" font-weight="bold" text-anchor="middle" fill="#2a2a10" font-family="Liberation Sans">21</text><text transform="translate(336.2,613.6) rotate(-45)" font-size="7.1" text-anchor="end" fill="#555" font-family="Liberation Sans">L2 CL</text><rect x="356.8" y="505.9" width="23.5" height="95.8" fill="#9c9e2d" stroke="#8e9030" stroke-width=".4"/><text x="368.6" y="504.6" font-size="7.2" text-anchor="middle" fill="#383838" font-family="Liberation Sans">27</text><text x="368.6" y="556.5" font-size="7.2" font-weight="bold" text-anchor="middle" fill="#2a2a10" font-family="Liberation Sans">27</text><text transform="translate(369.7,613.6) rotate(-45)" font-size="7.1" text-anchor="end" fill="#555" font-family="Liberation Sans">L5 Q</text><text x="334.1" y="610.2" font-size="7.1" font-weight="bold" text-anchor="middle" fill="#383838" font-family="Liberation Sans">G3</text><rect x="386.4" y="389.5" width="96.9" height="212.3" fill="#e9e9cf"/><path d="M386.4,566.3H483.3" stroke="#d9d9bd" stroke-width=".6" stroke-dasharray="1.2,1"/><path d="M386.4,530.8H483.3" stroke="#d9d9bd" stroke-width=".6" stroke-dasharray="1.2,1"/><path d="M386.4,495.3H483.3" stroke="#d9d9bd" stroke-width=".6" stroke-dasharray="1.2,1"/><path d="M386.4,459.8H483.3" stroke="#d9d9bd" stroke-width=".6" stroke-dasharray="1.2,1"/><path d="M386.4,424.3H483.3" stroke="#d9d9bd" stroke-width=".6" stroke-dasharray="1.2,1"/><path d="M401.9,388.8V601.8" stroke="#d9d9bd" stroke-width=".6" stroke-dasharray="1.2,1"/><path d="M435.4,388.8V601.8" stroke="#d9d9bd" stroke-width=".6" stroke-dasharray="1.2,1"/><path d="M468.8,388.8V601.8" stroke="#d9d9bd" stroke-width=".6" stroke-dasharray="1.2,1"/><rect x="390.2" y="452.7" width="23.5" height="3.8" fill="#c7c880" stroke="#b2b35c" stroke-width=".5"/><rect x="390.2" y="456.2" width="23.5" height="145.5" fill="#9c9e2d" stroke="#8e9030" stroke-width=".4"/><text x="401.9" y="451.4" font-size="7.2" text-anchor="middle" fill="#383838" font-family="Liberation Sans">42</text><text x="401.9" y="531.6" font-size="7.2" font-weight="bold" text-anchor="middle" fill="#2a2a10" font-family="Liberation Sans">41</text><text transform="translate(403.1,613.6) rotate(-45)" font-size="7.1" text-anchor="end" fill="#555" font-family="Liberation Sans">L1C/A</text><rect x="423.6" y="459.8" width="23.5" height="7.4" fill="#c7c880" stroke="#b2b35c" stroke-width=".5"/><rect x="423.6" y="466.9" width="23.5" height="134.9" fill="#9c9e2d" stroke="#8e9030" stroke-width=".4"/><text x="435.4" y="458.5" font-size="7.2" text-anchor="middle" fill="#383838" font-family="Liberation Sans">40</text><text x="435.4" y="536.9" font-size="7.2" font-weight="bold" text-anchor="middle" fill="#2a2a10" font-family="Liberation Sans">38</text><text transform="translate(436.5,613.6) rotate(-45)" font-size="7.1" text-anchor="end" fill="#555" font-family="Liberation Sans">L2 CL</text><rect x="457.0" y="427.8" width="23.5" height="3.8" fill="#c7c880" stroke="#b2b35c" stroke-width=".5"/><rect x="457.0" y="431.4" width="23.5" height="170.4" fill="#9c9e2d" stroke="#8e9030" stroke-width=".4"/><text x="468.8" y="426.5" font-size="7.2" text-anchor="middle" fill="#383838" font-family="Liberation Sans">49</text><text x="468.8" y="519.2" font-size="7.2" font-weight="bold" text-anchor="middle" fill="#2a2a10" font-family="Liberation Sans">48</text><text transform="translate(469.9,613.6) rotate(-45)" font-size="7.1" text-anchor="end" fill="#555" font-family="Liberation Sans">L5 Q</text><text x="434.4" y="610.2" font-size="7.1" font-weight="bold" text-anchor="middle" fill="#383838" font-family="Liberation Sans">G25</text><rect x="486.6" y="389.5" width="96.9" height="212.3" fill="#e9e9cf"/><path d="M486.6,566.3H583.5" stroke="#d9d9bd" stroke-width=".6" stroke-dasharray="1.2,1"/><path d="M486.6,530.8H583.5" stroke="#d9d9bd" stroke-width=".6" stroke-dasharray="1.2,1"/><path d="M486.6,495.3H583.5" stroke="#d9d9bd" stroke-width=".6" stroke-dasharray="1.2,1"/><path d="M486.6,459.8H583.5" stroke="#d9d9bd" stroke-width=".6" stroke-dasharray="1.2,1"/><path d="M486.6,424.3H583.5" stroke="#d9d9bd" stroke-width=".6" stroke-dasharray="1.2,1"/><path d="M502.1,388.8V601.8" stroke="#d9d9bd" stroke-width=".6" stroke-dasharray="1.2,1"/><path d="M535.5,388.8V601.8" stroke="#d9d9bd" stroke-width=".6" stroke-dasharray="1.2,1"/><path d="M569.0,388.8V601.8" stroke="#d9d9bd" stroke-width=".6" stroke-dasharray="1.2,1"/><rect x="490.4" y="434.9" width="23.5" height="10.9" fill="#c7c880" stroke="#b2b35c" stroke-width=".5"/><rect x="490.4" y="445.6" width="23.5" height="156.2" fill="#9c9e2d" stroke="#8e9030" stroke-width=".4"/><text x="502.1" y="433.6" font-size="7.2" text-anchor="middle" fill="#383838" font-family="Liberation Sans">47</text><text x="502.1" y="526.3" font-size="7.2" font-weight="bold" text-anchor="middle" fill="#2a2a10" font-family="Liberation Sans">44</text><text transform="translate(503.2,613.6) rotate(-45)" font-size="7.1" text-anchor="end" fill="#555" font-family="Liberation Sans">L1C/A</text><rect x="523.8" y="452.7" width="23.5" height="3.8" fill="#c7c880" stroke="#b2b35c" stroke-width=".5"/><rect x="523.8" y="456.2" width="23.5" height="145.5" fill="#9c9e2d" stroke="#8e9030" stroke-width=".4"/><text x="535.5" y="451.4" font-size="7.2" text-anchor="middle" fill="#383838" font-family="Liberation Sans">42</text><text x="535.5" y="531.6" font-size="7.2" font-weight="bold" text-anchor="middle" fill="#2a2a10" font-family="Liberation Sans">41</text><text transform="translate(536.6,613.6) rotate(-45)" font-size="7.1" text-anchor="end" fill="#555" font-family="Liberation Sans">L2 CL</text><rect x="557.2" y="424.3" width="23.5" height="177.5" fill="#9c9e2d" stroke="#8e9030" stroke-width=".4"/><text x="569.0" y="423.0" font-size="7.2" text-anchor="middle" fill="#383838" font-family="Liberation Sans">50</text><text x="569.0" y="515.6" font-size="7.2" font-weight="bold" text-anchor="middle" fill="#2a2a10" font-family="Liberation Sans">50</text><text transform="translate(570.1,613.6) rotate(-45)" font-size="7.1" text-anchor="end" fill="#555" font-family="Liberation Sans">L5 Q</text><text x="534.5" y="610.2" font-size="7.1" font-weight="bold" text-anchor="middle" fill="#383838" font-family="Liberation Sans">G26</text><rect x="586.8" y="389.5" width="96.9" height="212.3" fill="#e9e9cf"/><path d="M586.8,566.3H683.7" stroke="#d9d9bd" stroke-width=".6" stroke-dasharray="1.2,1"/><path d="M586.8,530.8H683.7" stroke="#d9d9bd" stroke-width=".6" stroke-dasharray="1.2,1"/><path d="M586.8,495.3H683.7" stroke="#d9d9bd" stroke-width=".6" stroke-dasharray="1.2,1"/><path d="M586.8,459.8H683.7" stroke="#d9d9bd" stroke-width=".6" stroke-dasharray="1.2,1"/><path d="M586.8,424.3H683.7" stroke="#d9d9bd" stroke-width=".6" stroke-dasharray="1.2,1"/><path d="M602.3,388.8V601.8" stroke="#d9d9bd" stroke-width=".6" stroke-dasharray="1.2,1"/><path d="M635.8,388.8V601.8" stroke="#d9d9bd" stroke-width=".6" stroke-dasharray="1.2,1"/><path d="M669.1,388.8V601.8" stroke="#d9d9bd" stroke-width=".6" stroke-dasharray="1.2,1"/><rect x="590.6" y="438.5" width="23.5" height="3.8" fill="#c7c880" stroke="#b2b35c" stroke-width=".5"/><rect x="590.6" y="442.0" width="23.5" height="159.8" fill="#9c9e2d" stroke="#8e9030" stroke-width=".4"/><text x="602.3" y="437.2" font-size="7.2" text-anchor="middle" fill="#383838" font-family="Liberation Sans">46</text><text x="602.3" y="524.5" font-size="7.2" font-weight="bold" text-anchor="middle" fill="#2a2a10" font-family="Liberation Sans">45</text><text transform="translate(603.4,613.6) rotate(-45)" font-size="7.1" text-anchor="end" fill="#555" font-family="Liberation Sans">L1C/A</text><rect x="624.0" y="438.5" width="23.5" height="163.3" fill="#9c9e2d" stroke="#8e9030" stroke-width=".4"/><text x="635.8" y="437.2" font-size="7.2" text-anchor="middle" fill="#383838" font-family="Liberation Sans">46</text><text x="635.8" y="522.8" font-size="7.2" font-weight="bold" text-anchor="middle" fill="#2a2a10" font-family="Liberation Sans">46</text><text transform="translate(636.9,613.6) rotate(-45)" font-size="7.1" text-anchor="end" fill="#555" font-family="Liberation Sans">L2 CL</text><rect x="657.4" y="420.8" width="23.5" height="181.0" fill="#9c9e2d" stroke="#8e9030" stroke-width=".4"/><text x="669.1" y="419.4" font-size="7.2" text-anchor="middle" fill="#383838" font-family="Liberation Sans">51</text><text x="669.1" y="513.9" font-size="7.2" font-weight="bold" text-anchor="middle" fill="#2a2a10" font-family="Liberation Sans">51</text><text transform="translate(670.2,613.6) rotate(-45)" font-size="7.1" text-anchor="end" fill="#555" font-family="Liberation Sans">L5 Q</text><text x="634.8" y="610.2" font-size="7.1" font-weight="bold" text-anchor="middle" fill="#383838" font-family="Liberation Sans">G28</text><rect x="687.0" y="389.5" width="63.5" height="212.3" fill="#e9e9cf"/><path d="M687.0,566.3H750.5" stroke="#d9d9bd" stroke-width=".6" stroke-dasharray="1.2,1"/><path d="M687.0,530.8H750.5" stroke="#d9d9bd" stroke-width=".6" stroke-dasharray="1.2,1"/><path d="M687.0,495.3H750.5" stroke="#d9d9bd" stroke-width=".6" stroke-dasharray="1.2,1"/><path d="M687.0,459.8H750.5" stroke="#d9d9bd" stroke-width=".6" stroke-dasharray="1.2,1"/><path d="M687.0,424.3H750.5" stroke="#d9d9bd" stroke-width=".6" stroke-dasharray="1.2,1"/><path d="M702.5,388.8V601.8" stroke="#d9d9bd" stroke-width=".6" stroke-dasharray="1.2,1"/><path d="M736.0,388.8V601.8" stroke="#d9d9bd" stroke-width=".6" stroke-dasharray="1.2,1"/><rect x="690.8" y="445.6" width="23.5" height="156.2" fill="#9c9e2d" stroke="#8e9030" stroke-width=".4"/><text x="702.5" y="444.3" font-size="7.2" text-anchor="middle" fill="#383838" font-family="Liberation Sans">44</text><text x="702.5" y="526.3" font-size="7.2" font-weight="bold" text-anchor="middle" fill="#2a2a10" font-family="Liberation Sans">44</text><text transform="translate(703.6,613.6) rotate(-45)" font-size="7.1" text-anchor="end" fill="#555" font-family="Liberation Sans">L1C/A</text><rect x="724.2" y="456.2" width="23.5" height="3.8" fill="#c7c880" stroke="#b2b35c" stroke-width=".5"/><rect x="724.2" y="459.8" width="23.5" height="142.0" fill="#9c9e2d" stroke="#8e9030" stroke-width=".4"/><text x="736.0" y="454.9" font-size="7.2" text-anchor="middle" fill="#383838" font-family="Liberation Sans">41</text><text x="736.0" y="533.4" font-size="7.2" font-weight="bold" text-anchor="middle" fill="#2a2a10" font-family="Liberation Sans">40</text><text transform="translate(737.1,613.6) rotate(-45)" font-size="7.1" text-anchor="end" fill="#555" font-family="Liberation Sans">L2 CL</text><text x="718.2" y="610.2" font-size="7.1" font-weight="bold" text-anchor="middle" fill="#383838" font-family="Liberation Sans">G29</text><rect x="753.8" y="389.5" width="63.5" height="212.3" fill="#e9e9cf"/><path d="M753.8,566.3H817.3" stroke="#d9d9bd" stroke-width=".6" stroke-dasharray="1.2,1"/><path d="M753.8,530.8H817.3" stroke="#d9d9bd" stroke-width=".6" stroke-dasharray="1.2,1"/><path d="M753.8,495.3H817.3" stroke="#d9d9bd" stroke-width=".6" stroke-dasharray="1.2,1"/><path d="M753.8,459.8H817.3" stroke="#d9d9bd" stroke-width=".6" stroke-dasharray="1.2,1"/><path d="M753.8,424.3H817.3" stroke="#d9d9bd" stroke-width=".6" stroke-dasharray="1.2,1"/><path d="M769.3,388.8V601.8" stroke="#d9d9bd" stroke-width=".6" stroke-dasharray="1.2,1"/><path d="M802.8,388.8V601.8" stroke="#d9d9bd" stroke-width=".6" stroke-dasharray="1.2,1"/><rect x="757.6" y="438.5" width="23.5" height="163.3" fill="#9c9e2d" stroke="#8e9030" stroke-width=".4"/><text x="769.3" y="437.2" font-size="7.2" text-anchor="middle" fill="#383838" font-family="Liberation Sans">46</text><text x="769.3" y="522.8" font-size="7.2" font-weight="bold" text-anchor="middle" fill="#2a2a10" font-family="Liberation Sans">46</text><text transform="translate(770.4,613.6) rotate(-45)" font-size="7.1" text-anchor="end" fill="#555" font-family="Liberation Sans">L1C/A</text><rect x="791.0" y="459.8" width="23.5" height="142.0" fill="#9c9e2d" stroke="#8e9030" stroke-width=".4"/><text x="802.8" y="458.5" font-size="7.2" text-anchor="middle" fill="#383838" font-family="Liberation Sans">40</text><text x="802.8" y="533.4" font-size="7.2" font-weight="bold" text-anchor="middle" fill="#2a2a10" font-family="Liberation Sans">40</text><text transform="translate(803.9,613.6) rotate(-45)" font-size="7.1" text-anchor="end" fill="#555" font-family="Liberation Sans">L2 CL</text><text x="785.0" y="610.2" font-size="7.1" font-weight="bold" text-anchor="middle" fill="#383838" font-family="Liberation Sans">G31</text><rect x="820.6" y="389.5" width="96.9" height="212.3" fill="#e9e9cf"/><path d="M820.6,566.3H917.5" stroke="#d9d9bd" stroke-width=".6" stroke-dasharray="1.2,1"/><path d="M820.6,530.8H917.5" stroke="#d9d9bd" stroke-width=".6" stroke-dasharray="1.2,1"/><path d="M820.6,495.3H917.5" stroke="#d9d9bd" stroke-width=".6" stroke-dasharray="1.2,1"/><path d="M820.6,459.8H917.5" stroke="#d9d9bd" stroke-width=".6" stroke-dasharray="1.2,1"/><path d="M820.6,424.3H917.5" stroke="#d9d9bd" stroke-width=".6" stroke-dasharray="1.2,1"/><path d="M836.1,388.8V601.8" stroke="#d9d9bd" stroke-width=".6" stroke-dasharray="1.2,1"/><path d="M869.5,388.8V601.8" stroke="#d9d9bd" stroke-width=".6" stroke-dasharray="1.2,1"/><path d="M902.9,388.8V601.8" stroke="#d9d9bd" stroke-width=".6" stroke-dasharray="1.2,1"/><rect x="824.4" y="427.8" width="23.5" height="173.9" fill="#9c9e2d" stroke="#8e9030" stroke-width=".4"/><text x="836.1" y="426.5" font-size="7.2" text-anchor="middle" fill="#383838" font-family="Liberation Sans">49</text><text x="836.1" y="517.4" font-size="7.2" font-weight="bold" text-anchor="middle" fill="#2a2a10" font-family="Liberation Sans">49</text><text transform="translate(837.2,613.6) rotate(-45)" font-size="7.1" text-anchor="end" fill="#555" font-family="Liberation Sans">L1C/A</text><rect x="857.8" y="449.1" width="23.5" height="152.7" fill="#9c9e2d" stroke="#8e9030" stroke-width=".4"/><text x="869.5" y="447.8" font-size="7.2" text-anchor="middle" fill="#383838" font-family="Liberation Sans">43</text><text x="869.5" y="528.1" font-size="7.2" font-weight="bold" text-anchor="middle" fill="#2a2a10" font-family="Liberation Sans">43</text><text transform="translate(870.6,613.6) rotate(-45)" font-size="7.1" text-anchor="end" fill="#555" font-family="Liberation Sans">L2 CL</text><rect x="891.2" y="424.3" width="23.5" height="3.8" fill="#c7c880" stroke="#b2b35c" stroke-width=".5"/><rect x="891.2" y="427.8" width="23.5" height="173.9" fill="#9c9e2d" stroke="#8e9030" stroke-width=".4"/><text x="902.9" y="423.0" font-size="7.2" text-anchor="middle" fill="#383838" font-family="Liberation Sans">50</text><text x="902.9" y="517.4" font-size="7.2" font-weight="bold" text-anchor="middle" fill="#2a2a10" font-family="Liberation Sans">49</text><text transform="translate(904.0,613.6) rotate(-45)" font-size="7.1" text-anchor="end" fill="#555" font-family="Liberation Sans">L5 Q</text><text x="868.5" y="610.2" font-size="7.1" font-weight="bold" text-anchor="middle" fill="#383838" font-family="Liberation Sans">G32</text><path d="M286,602.3H917.6" stroke="#d0d0d0" stroke-width=".8"/></svg>
<svg style="left:0px;top:0px" width="1024" height="657" viewBox="0 0 1024 657"><path d="M354,353.6h11.5" stroke="#1a1a1a" stroke-width="1.6"/><path d="M485.2,209.5v11.5" stroke="#1a1a1a" stroke-width="1.6"/><path d="M479,353.2h6.2v-6.2" stroke="#1a1a1a" stroke-width="1.5" fill="none"/><path d="M576.5,633.4h12.5" stroke="#1a1a1a" stroke-width="1.6"/><path d="M933,489v12" stroke="#1a1a1a" stroke-width="1.6"/><path d="M926.6,633.2h6.2v-6.2" stroke="#1a1a1a" stroke-width="1.5" fill="none"/></svg>
<div class="a" style="left:228px;top:634.3px;width:789.5px;height:5.9px;background:#f0f0f0;"></div>
<div class="a" style="left:228px;top:634.3px;width:712.8px;height:5.9px;background:#9a9a9a;"></div>
<div class="a" style="left:1017.4px;top:72px;width:6.6px;height:568px;background:#efefef;"></div>
<div class="a" style="left:1017.4px;top:72px;width:6.6px;height:558.8px;background:#9a9a9a;"></div>
<div class="a" style="left:1px;top:640.4px;width:1023px;height:16.6px;background:#f1f1f1;"></div>
<div class="a" style="left:1px;top:640.2px;width:1023px;height:0.8px;background:#dedede;"></div>
<div class="t" style="font-size:10.50px;color:#444;top:643.46px;left:956.40px;transform-origin:0 50%;">-</div>
<div class="t" style="font-size:10.95px;color:#333;top:643.64px;left:968.00px;transform-origin:0 50%;">100%</div>
<div class="t" style="font-size:8.50px;color:#333;top:644.63px;left:1002.00px;transform-origin:0 50%;">+</div>
<div class="a" style="left:0px;top:656px;width:137px;height:1px;background:#45a3b8;"></div>
<div class="a" style="left:137px;top:656px;width:887px;height:1px;background:#8c8c8c;"></div>
</div></body></html>
